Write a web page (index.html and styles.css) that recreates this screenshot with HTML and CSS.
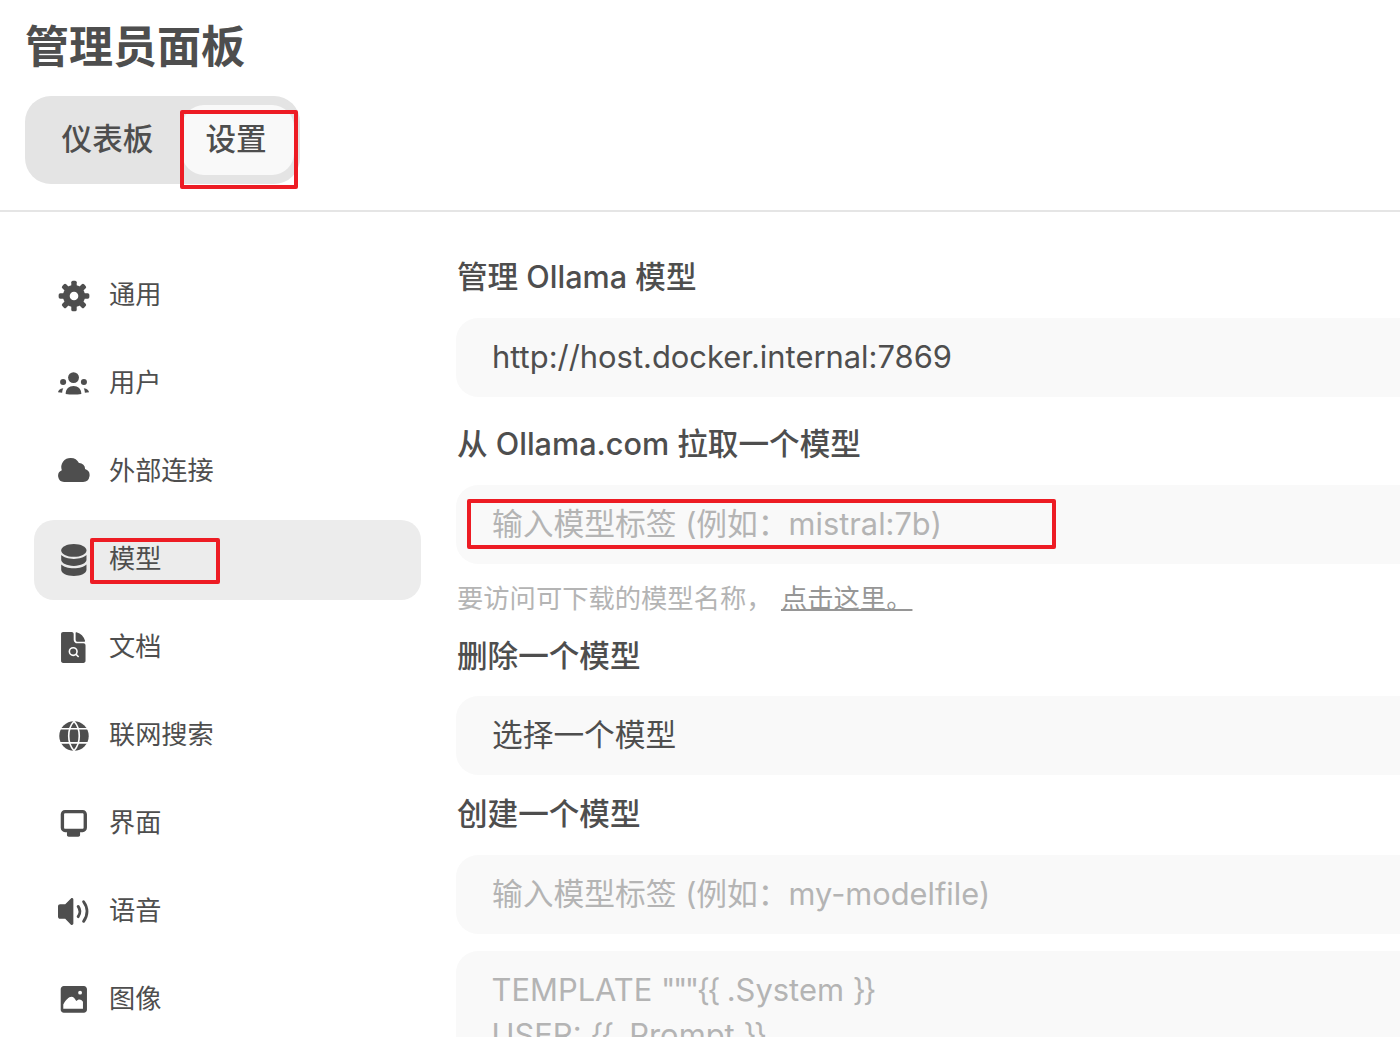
FILE: index.html
```html
<!DOCTYPE html>
<html lang="zh-CN">
<head>
	<meta charset="utf-8">
	<title>管理员面板</title>
	<link rel="stylesheet" href="styles.css">
</head>
<body>
	<header class="top">
		<h1 class="title">管理员面板</h1>
		<div class="tabs">
			<a class="tab">仪表板</a>
			<a class="tab tab-on">设置</a>
			<span class="mark mark-tab"></span>
		</div>
	</header>

	<div class="page">
		<nav class="side">
			<a class="item">
				<svg class="icon" viewBox="0 0 20 20">
					<circle cx="10" cy="10" r="6.900"/>
					<g class="teeth">
						<rect x="8.300" y=".4" width="3.400" height="19.200" rx="1"/>
						<rect x="8.300" y=".4" width="3.400" height="19.200" rx="1" transform="rotate(45 10 10)"/>
						<rect x="8.300" y=".4" width="3.400" height="19.200" rx="1" transform="rotate(90 10 10)"/>
						<rect x="8.300" y=".4" width="3.400" height="19.200" rx="1" transform="rotate(135 10 10)"/>
					</g>
					<circle class="hole" cx="10" cy="10" r="2.700"/>
				</svg>
				<span>通用</span>
			</a>
			<a class="item">
				<svg class="icon" viewBox="0 0 20 20"><circle cx="9.700" cy="6" r="3.400"/><path d="M4.800 16.200c0-3.200 2.100-5 4.900-5s4.900 1.800 4.900 5c-1.500.3-3.200.4-4.900.4s-3.400-.1-4.900-.4Z"/><circle cx="3.200" cy="8.800" r="1.900"/><circle cx="16.200" cy="8.800" r="1.900"/><path d="M0 15.200c.2-1.300 1-2.300 3.300-2.600-.4.8-.6 1.700-.7 2.900-.9 0-1.800-.1-2.600-.3ZM19.400 15.200c-.2-1.300-1-2.300-3.300-2.600.4.8.6 1.700.7 2.900.9 0 1.800-.1 2.600-.3Z"/></svg>
				<span>用户</span>
			</a>
			<a class="item">
				<svg class="icon" viewBox="0 0 20 20"><path d="M3.800 16.200A3.800 3.800 0 0 1 2.400 8.900 5.700 5.700 0 0 1 8 1.200a5.600 5.600 0 0 1 5.100 3.200 3.600 3.600 0 0 1 3.800 3.800 4.100 4.100 0 0 1-1.200 8H3.800Z"/></svg>
				<span>外部连接</span>
			</a>
			<a class="item item-on">
				<svg class="icon" viewBox="0 0 20 20"><path d="M17.800 4c0 2.200-3.500 4-7.900 4S2 6.200 2 4 5.500 0 9.900 0s7.900 1.800 7.900 4Z"/><path d="M9.900 9.300c3.500 0 6.500-.9 7.900-2.400v3c0 2.100-3.500 3.800-7.900 3.800S2 12 2 9.900v-3c1.400 1.500 4.400 2.400 7.900 2.400Z"/><path d="M9.900 15.200c3.500 0 6.500-.9 7.900-2.400v3.300c0 2.100-3.500 3.900-7.900 3.900S2 18.200 2 16.100v-3.300c1.400 1.500 4.400 2.400 7.900 2.400Z"/></svg>
				<span>模型</span>
				<span class="mark mark-item"></span>
			</a>
			<a class="item">
				<svg class="icon" viewBox="0 0 20 20"><path d="M1.900 1.300C1.900.5 2.500 0 3.200 0h5.300c.8 0 1.300.6 1.300 1.300v3.500c0 1.300 1 2.300 2.300 2.300h3.800c.8 0 1.300.6 1.300 1.300V18c0 .8-.6 1.400-1.300 1.400H3.200c-.8 0-1.300-.6-1.300-1.400V1.300Z"/><path d="M11 .5c0-.3.3-.5.6-.3a8 8 0 0 1 5.300 5.300c.1.3-.2.6-.5.6h-4.100c-.7 0-1.300-.6-1.300-1.300V.5Z"/><g class="lines"><circle cx="9.500" cy="12.200" r="2.400"/><path d="M11.300 14l1.600 1.600"/></g></svg>
				<span>文档</span>
			</a>
			<a class="item">
				<svg class="icon" viewBox="0 0 20 20"><circle cx="10" cy="10" r="9.200"/><g class="lines"><path d="M.6 5.500h18.800M.6 14.300h18.800"/><path d="M10 .8C7.600 3.400 6.700 6.700 6.700 10s.9 6.600 3.300 9.200M10 .8c2.400 2.600 3.300 5.900 3.300 9.200s-.9 6.600-3.300 9.200"/></g></svg>
				<span>联网搜索</span>
			</a>
			<a class="item">
				<svg class="icon" viewBox="0 0 20 20"><path fill-rule="evenodd" d="M4.400 1.200h11c1.500 0 2.700 1.200 2.700 2.700v8.500c0 1.500-1.200 2.700-2.700 2.700h-1.600v1.700c0 .6-.5 1.100-1.100 1.100H6.700c-.6 0-1.100-.5-1.100-1.100v-1.700H4.400c-1.500 0-2.700-1.200-2.700-2.700V3.900c0-1.500 1.200-2.700 2.700-2.700Zm.1 2.100c-.4 0-.7.3-.7.700v8.300c0 .4.300.7.7.7h10.800c.4 0 .7-.3.7-.7V4c0-.4-.3-.7-.7-.7H4.500Z"/></svg>
				<span>界面</span>
			</a>
			<a class="item">
				<svg class="icon" viewBox="0 0 20 20"><path d="M9.600 2.200v15c0 .8-.9 1.200-1.500.7l-3.600-3.700H1.300C.6 14.200 0 13.600 0 12.900V6.500c0-.7.6-1.300 1.300-1.300h3.200l3.600-3.700c.6-.5 1.500-.1 1.500.7Z"/><path class="wave" d="M12.600 6.500c1.400 2 1.400 4.400 0 6.400M16 3.600c2.800 3.800 2.800 8.400 0 12.200"/></svg>
				<span>语音</span>
			</a>
			<a class="item">
				<svg class="icon" viewBox="0 0 20 20"><path fill-rule="evenodd" d="M3.600 1.200h12.600c1 0 1.900.9 1.900 1.900v13c0 1-.9 1.900-1.900 1.900H3.600c-1 0-1.900-.9-1.900-1.900v-13c0-1 .9-1.900 1.900-1.900Zm-.3 14.300h12.300v-4.400c-.7-.9-1.400-1.400-2.200-1.400-.7 0-1.400.4-2 1-.7-1.400-1.700-2.700-3-2.700-1.700 0-3.500 2-5.100 4.800v2.700Zm10.500-8.900a1.200 1.200 0 1 0 0-2.400 1.200 1.200 0 0 0 0 2.400Z"/></svg>
				<span>图像</span>
			</a>
		</nav>

		<main class="form">
			<label class="label first">管理 Ollama 模型</label>
			<input class="field" value="http://host.docker.internal:7869">

			<label class="label">从 Ollama.com 拉取一个模型</label>
			<div class="field-wrap">
				<input class="field" placeholder="输入模型标签 (例如：mistral:7b)">
				<span class="mark mark-field"></span>
			</div>
			<p class="hint">要访问可下载的模型名称， <a class="hint-link">点击这里。</a></p>

			<label class="label label-tight label-short">删除一个模型</label>
			<div class="field select">选择一个模型</div>

			<label class="label label-tight">创建一个模型</label>
			<input class="field" placeholder="输入模型标签 (例如：my-modelfile)">
			<div class="field area">
				<div>TEMPLATE <span class="tight">"""{{</span> .System <span class="tight">}}</span></div>
				<div>USER: <span class="tight">{{</span> .Prompt <span class="tight">}}</span></div>
			</div>
		</main>
	</div>
</body>
</html>
```

FILE: styles.css
```css
html, body {
	height: 100%;
}

body {
	margin: 0;
	overflow: hidden;
	background: #fff;
	color: #4e4e4e;
	font-family: Inter, "Noto Sans CJK SC", sans-serif;
	font-size: 30.6px;
}

.top {
	padding: 0 0 26px 25px;
	border-bottom: 2px solid #e5e5e5;
}

.title {
	margin: 0;
	height: 96px;
	font-size: 44px;
	line-height: 94px;
	font-weight: 700;
}

.tabs {
	position: relative;
	display: flex;
	width: 275px;
	height: 88px;
	box-sizing: border-box;
	padding: 9px 6px 9px 0;
	background: #e4e4e4;
	border-radius: 26px;
}

.tab {
	display: flex;
	align-items: center;
	justify-content: center;
	height: 70px;
	width: 157px;
	padding-left: 8px;
	padding-bottom: 2px;
	box-sizing: border-box;
	line-height: 64px;
	font-weight: 500;
}

.tab-on {
	width: 112px;
	padding-left: 0;
	padding-right: 4px;
	background: #f9f9f9;
	border-radius: 22px;
}

.mark {
	position: absolute;
	box-sizing: border-box;
	border: 4px solid #ed1c24;
	border-radius: 2px;
}

.mark-tab {
	left: 155px;
	top: 14px;
	width: 118px;
	height: 79px;
}

.page {
	display: flex;
	width: 1700px;
}

.side {
	width: 387px;
	margin-left: 34px;
	padding-top: 44px;
	display: flex;
	flex-direction: column;
	gap: 8px;
	font-size: 26.2px;
}

.item {
	position: relative;
	display: flex;
	align-items: center;
	gap: 19px;
	height: 80px;
	padding-left: 24px;
	border-radius: 20px;
}

.item span {
	height: 76px;
	line-height: 74px;
}

.item-on {
	background: #ececec;
}

.icon {
	width: 32px;
	height: 32px;
	flex: none;
	fill: #4e4e4e;
}

.hole {
	fill: #fff;
}

.lines {
	fill: none;
	stroke: #fff;
	stroke-width: 1;
}

.wave {
	fill: none;
	stroke: #4e4e4e;
	stroke-width: 1.8;
	stroke-linecap: round;
}

.item .mark-item {
	left: 56px;
	top: 18px;
	width: 130px;
	height: 46px;
}

.form {
	flex: 1;
	margin-left: 36px;
	padding-top: 43px;
	display: flex;
	flex-direction: column;
}

.label {
	display: block;
	height: 44px;
	line-height: 44px;
	margin-top: 25px;
	margin-bottom: 19px;
	font-weight: 500;
}

.label.first {
	margin-top: 0;
}

.label-tight {
	margin-top: 17px;
}

.label-short {
	margin-bottom: 18px;
}

.field {
	display: block;
	width: calc(100% + 1px);
	height: 79px;
	box-sizing: border-box;
	padding: 0 35px 2px 36px;
	border: 0;
	outline: 0;
	margin: 0 0 0 -1px;
	background: #f9f9f9;
	border-radius: 22px;
	color: #4e4e4e;
	font: inherit;
	font-size: 30.9px;
}

.field::placeholder {
	color: #b4b4b4;
	opacity: 1;
	font-size: 30.75px;
}

.field-wrap {
	position: relative;
}

.mark-field {
	left: 10px;
	top: 14px;
	width: 589px;
	height: 50px;
}

.hint {
	margin: 17px 0 0;
	height: 36px;
	line-height: 36px;
	font-size: 26.3px;
	color: #b4b4b4;
}

.hint-link {
	margin-left: 1px;
	color: #969696;
	text-decoration: underline;
	text-decoration-thickness: 2px;
}

.select {
	font-size: 30.7px;
	line-height: 77px;
}

.area {
	margin-top: 17px;
	height: 200px;
	padding-top: 16px;
	padding-left: 35.5px;
	line-height: 45px;
	color: #b4b4b4;
}

.tight {
	letter-spacing: -2.500px;
}
```
